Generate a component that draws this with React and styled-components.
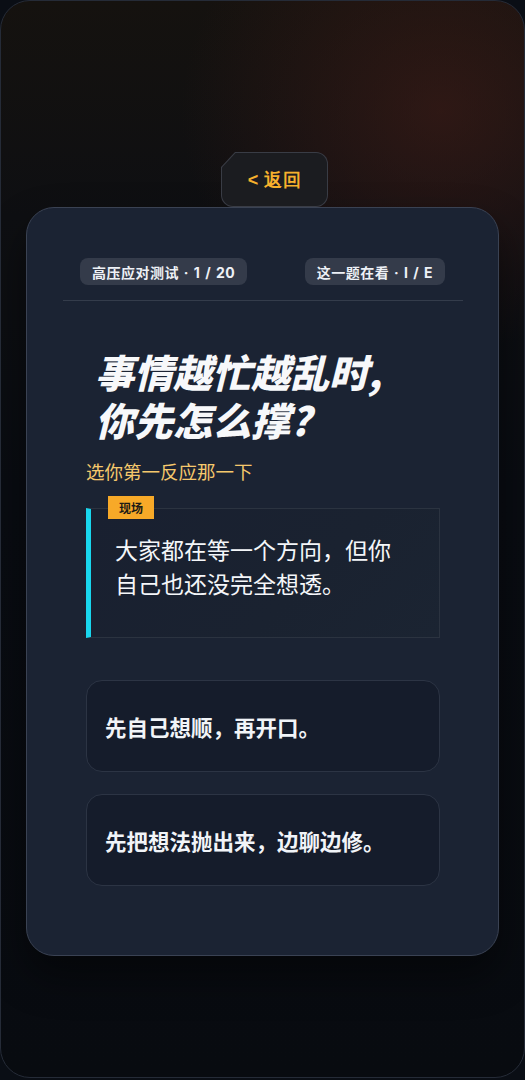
import React from "react";
import styled, { createGlobalStyle } from "styled-components";

const GlobalStyle = createGlobalStyle`
  html, body {
    margin: 0;
    padding: 0;
    background: #0a0e15;
  }
  body {
    font-family: Inter, "Noto Sans CJK SC", sans-serif;
    color: #f3f5f8;
  }
  * { box-sizing: border-box; }
`

const Frame = styled.div`
  width: 525px;
  height: 1078px;
  border: 1px solid #252b37;
  border-radius: 30px;
  overflow: hidden;
  display: flex;
  flex-direction: column;
  padding-top: 151px;
  background:
    radial-gradient(ellipse 260px 240px at 440px 110px, rgba(70, 30, 24, 0.55), rgba(70, 30, 24, 0) 100%),
    linear-gradient(180deg, #15120f 0%, #0e0f12 20%, #090c12 45%, #080b10 100%);
`

const BackButton = styled.button`
  align-self: flex-start;
  margin-left: 220px;
  width: 107px;
  height: 55px;
  padding: 1px;
  border: 0;
  border-radius: 12px;
  background: #393c45;
  clip-path: polygon(14px 0, 100% 0, 100% 100%, 0 100%, 0 15px);
  cursor: pointer;
`

const BackInner = styled.span`
  display: flex;
  align-items: center;
  justify-content: center;
  width: 100%;
  height: 100%;
  border-radius: 11px;
  background: #1b1c20;
  clip-path: polygon(13.5px 0, 100% 0, 100% 100%, 0 100%, 0 14.5px);
  color: #f6b12d;
  font-size: 18px;
  font-weight: 700;
  letter-spacing: 0.5px;
`

const Card = styled.section`
  margin: 0 25px;
  height: 749px;
  border: 1px solid #3a4253;
  border-radius: 28px;
  background: #1b2333;
  box-shadow: 0 20px 40px rgba(0, 0, 0, 0.45);
  padding-top: 50px;
`

const Header = styled.div`
  margin: 0 35px 0 36px;
  padding: 0 18px 15px 17px;
  border-bottom: 1px solid #343c4b;
  display: flex;
  justify-content: space-between;
`

const Chip = styled.span`
  height: 27px;
  padding: 0 12px;
  border-radius: 8px;
  background: #343b4a;
  display: flex;
  align-items: center;
  font-size: 14px;
  font-weight: 700;
  letter-spacing: 0.5px;
  word-spacing: 1px;
  color: #eef1f6;
  white-space: nowrap;
`

const Body = styled.div`
  margin: 0 58px 0 59px;
  display: flex;
  flex-direction: column;
`

const Title = styled.h1`
  margin: 46px 0 0;
  padding-left: 9px;
  font-family: "Noto Sans CJK SC", sans-serif;
  font-size: 39px;
  line-height: 48px;
  font-weight: 800;
  font-style: italic;
  color: #f7f8fa;
`

const Hint = styled.p`
  margin: 16px 0 0;
  font-size: 18.5px;
  line-height: 27px;
  color: #f5c86c;
`

const Scene = styled.div`
  position: relative;
  margin-top: 22px;
  height: 130px;
  border: 1px solid #2b3340;
  border-left: 5px solid #19d6ee;
  background: linear-gradient(135deg, #192030 0%, #1a2230 60%, #1b2432 100%);
  padding: 25px 20px 0 24px;
`

const Tag = styled.span`
  position: absolute;
  top: -13px;
  left: 17px;
  height: 23px;
  padding: 0 11px;
  background: #f7a928;
  color: #1c1a16;
  font-size: 12px;
  font-weight: 700;
  display: flex;
  align-items: center;
`

const SceneText = styled.p`
  margin: 0;
  max-width: 285px;
  font-size: 23px;
  line-height: 34px;
  color: #f4f6f9;
`

const Options = styled.div`
  margin-top: 42px;
  display: flex;
  flex-direction: column;
  gap: 22px;
`

const Option = styled.button`
  height: 92px;
  border: 1px solid #2c3444;
  border-radius: 16px;
  background: #151c2b;
  padding: 0 18px;
  display: flex;
  align-items: center;
  text-align: left;
  font-family: Inter, "Noto Sans CJK SC", sans-serif;
  font-size: 21.5px;
  font-weight: 700;
  color: #f1f4f8;
  cursor: pointer;
`

const App = () => {
  const choices = ["先自己想顺，再开口。", "先把想法抛出来，边聊边修。"];
  return (
    <>
      <GlobalStyle />
      <Frame>
        <BackButton>
          <BackInner>&lt; 返回</BackInner>
        </BackButton>
        <Card>
          <Header>
            <Chip>高压应对测试 · 1 / 20</Chip>
            <Chip>这一题在看 · I / E</Chip>
          </Header>
          <Body>
            <Title>
              事情越忙越乱时,
              <br />
              你先怎么撑?
            </Title>
            <Hint>选你第一反应那一下</Hint>
            <Scene>
              <Tag>现场</Tag>
              <SceneText>大家都在等一个方向，但你自己也还没完全想透。</SceneText>
            </Scene>
            <Options>
              {choices.map(c => (
                <Option key={c}>{c}</Option>
              ))}
            </Options>
          </Body>
        </Card>
      </Frame>
    </>
  );
};

export default App;
